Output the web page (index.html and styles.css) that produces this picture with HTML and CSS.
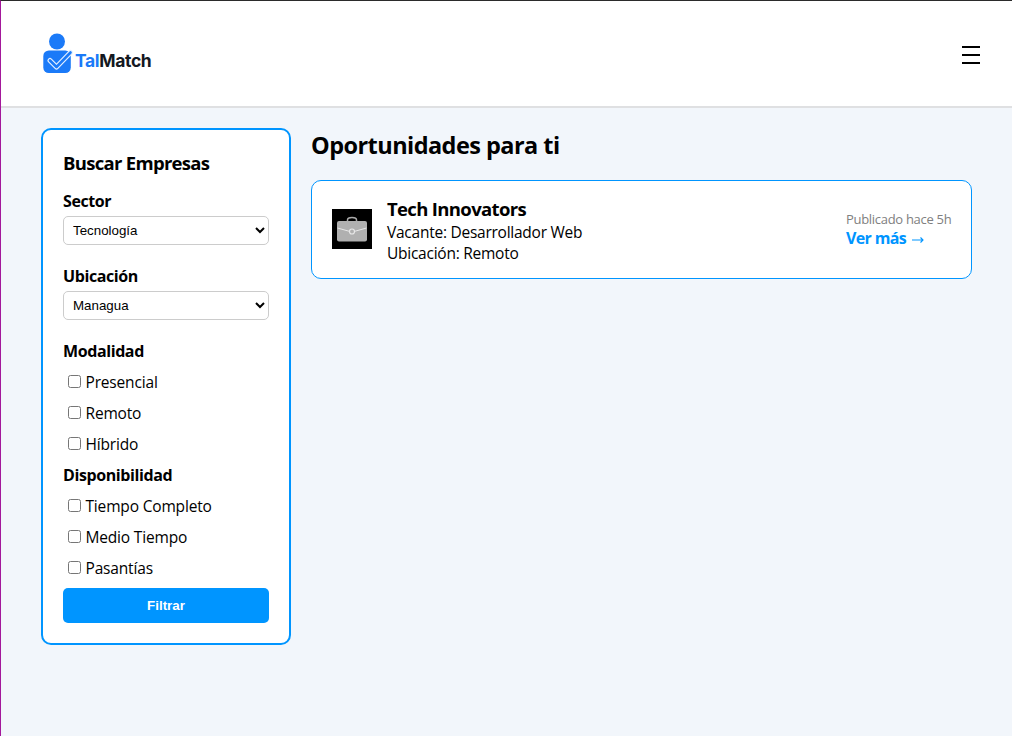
FILE: index.html
```html
<!DOCTYPE html>
<html lang="es">
<head>
<meta charset="utf-8">
<title>TalMatch</title>
<link rel="stylesheet" href="styles.css">
</head>
<body>
<div class="page">
  <header class="header">
    <div class="logo">
      <svg class="logo-mark" width="32" height="42" viewBox="0 0 32 42">
        <circle cx="15" cy="8.500" r="8" fill="#1b7af8"/>
        <rect x="1.300" y="17.500" width="27.500" height="22.500" rx="5.500" fill="#1b7af8"/>
        <path d="M8 27.500L14.500 34L28.500 19.500" fill="none" stroke="#e4efff" stroke-width="5" stroke-linecap="round" stroke-linejoin="round"/>
        <path d="M8 27.500L14.500 34L28.500 19.500" fill="none" stroke="#1b7af8" stroke-width="2.600" stroke-linecap="round" stroke-linejoin="round"/>
      </svg>
      <span class="logo-text"><span class="logo-tal">Tal</span>Match</span>
    </div>
    <svg class="menu" width="18" height="18" viewBox="0 0 18 18">
      <path d="M0 1H18M0 9H18M0 17H18" stroke="#000" stroke-width="2"/>
    </svg>
  </header>
  <div class="content">
    <aside class="sidebar">
      <h3 class="side-title">Buscar Empresas</h3>
      <div class="label">Sector</div>
      <select class="select"><option>Tecnología</option></select>
      <div class="label">Ubicación</div>
      <select class="select"><option>Managua</option></select>
      <div class="label">Modalidad</div>
      <label class="check"><input type="checkbox"><span>Presencial</span></label>
      <label class="check"><input type="checkbox"><span>Remoto</span></label>
      <label class="check"><input type="checkbox"><span>Híbrido</span></label>
      <div class="label">Disponibilidad</div>
      <label class="check"><input type="checkbox"><span>Tiempo Completo</span></label>
      <label class="check"><input type="checkbox"><span>Medio Tiempo</span></label>
      <label class="check"><input type="checkbox"><span>Pasantías</span></label>
      <button class="filter">Filtrar</button>
    </aside>
    <main class="main">
      <h2 class="title">Oportunidades para ti</h2>
      <article class="card">
        <svg class="case" width="40" height="40" viewBox="0 0 40 40">
          <rect width="40" height="40" fill="#000"/>
          <path d="M15.500 12V11Q15.500 8.500 20 8.500Q24.500 8.500 24.500 11V12" fill="none" stroke="#aaa" stroke-width="1.500"/>
          <rect x="5" y="12" width="30" height="20.500" rx="2" fill="#b0b0b0"/>
          <path d="M5.500 19L18 22.500M22 22.500L34.500 19" fill="none" stroke="#e8e8e8"/>
          <circle cx="20" cy="22.500" r="2.500" fill="#b0b0b0" stroke="#e8e8e8" stroke-width="1.200"/>
        </svg>
        <div class="info">
          <h3 class="company">Tech Innovators</h3>
          <p class="line">Vacante: Desarrollador Web</p>
          <p class="line">Ubicación: Remoto</p>
        </div>
        <div class="meta">
          <div class="date">Publicado hace 5h</div>
          <div class="more">Ver más <svg class="arrow" width="12" height="8" viewBox="0 0 12 8"><path d="M0 4H11M8.500 1.500L11 4L8.500 6.500" fill="none" stroke="#0095ff" stroke-width="1.100"/></svg></div>
        </div>
      </article>
    </main>
  </div>
</div>
</body>
</html>
```
FILE: styles.css
```css
* { box-sizing: border-box; margin: 0; padding: 0; }
body { background: #fff; color: #000; font-family: "Open Sans", "Noto Sans", sans-serif; font-size: 15.5px; line-height: 21px; }
.page { width: 1012px; height: 736px; background: #f2f6fb; border-top: 1px solid #2b2b2b; border-left: 1px solid #a3189b; overflow: hidden; }
.header { height: 107px; background: #fff; border-bottom: 2px solid #dfe0e2; padding: 0 32px 0 41px; display: flex; align-items: center; justify-content: space-between; }
.logo { display: flex; align-items: center; }
.logo-text { font-family: Inter, sans-serif; font-weight: 700; font-size: 17.5px; letter-spacing: -0.35px; color: #14181f; margin: 13px 0 0 1px; white-space: nowrap; }
.logo-tal { color: #1b7af8; }
.menu { display: block; margin-top: 2px; }
.content { display: flex; align-items: flex-start; gap: 20px; padding: 20px 40px; }
.sidebar { width: 250px; height: 517px; flex: none; background: #fff; border: 2px solid #0095ff; border-radius: 10px; padding: 20px; }
.side-title { font-size: 18.5px; line-height: 25px; font-weight: 700; margin-bottom: 16px; letter-spacing: -0.7px; }
.label { font-size: 16px; font-weight: 700; letter-spacing: -0.4px; height: 21px; }
.select { display: block; width: 206px; height: 29px; margin: 4px 0 21px; padding: 0 5px; border: 1px solid #ccc; border-radius: 5px; background: #fff; color: #000; font: 13.333px "Liberation Sans", sans-serif; }
.check { display: flex; height: 21px; margin: 10px 0; letter-spacing: -0.17px; }
.check input { width: 13px; height: 13px; margin: 3px 4.5px 0 5px; }
.filter { display: block; width: 206px; height: 35px; margin-top: -1px; border: 0; border-radius: 5px; background: #0095ff; color: #fff; font: bold 13.333px "Liberation Sans", sans-serif; }
.main { flex: 1; }
.title { font-size: 23.5px; line-height: 32px; margin: 1px 0 19px; letter-spacing: -0.55px; }
.card { height: 99px; display: flex; align-items: center; background: #fff; border: 1px solid #0095ff; border-radius: 10px; padding: 0 20px; }
.case { display: block; margin: 0 15px 2px 0; }
.info { flex: 1; }
.company { font-size: 18.5px; line-height: 25px; margin-bottom: 1px; letter-spacing: -0.65px; }
.line { letter-spacing: -0.25px; }
.meta { width: 105px; white-space: nowrap; padding-bottom: 2px; }
.date { font-size: 13px; line-height: 19px; color: gray; letter-spacing: -0.3px; }
.more { font-size: 16px; font-weight: 700; line-height: 19px; color: #0095ff; letter-spacing: -0.65px; }
.arrow { margin-left: 2px; }
```
